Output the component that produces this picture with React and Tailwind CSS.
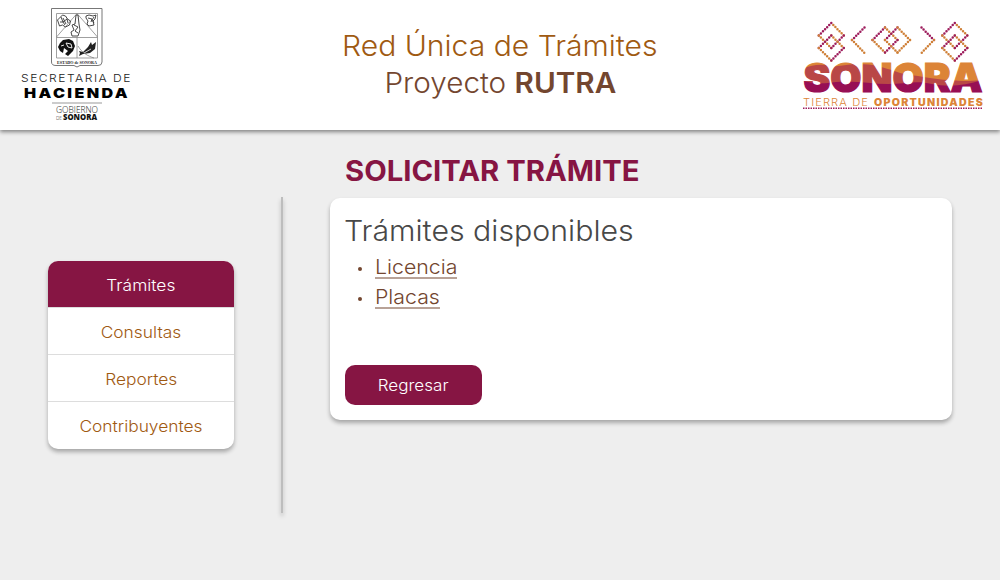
const M = "#9d1c5c";
const O = "#cf8038";

const dots = (pts) => pts.map(([x1, y1, x2, y2, c], i) => (
  <path key={i} d={`M${x1} ${y1}L${x2} ${y2}`} stroke={c} strokeWidth="2.5" strokeLinecap="round" strokeDasharray="0 2.94" />
));

function Diamonds({ x }) {
  return (
    <g>
      {dots([
        [x + 2, 25, x + 12.5, 35.5, O], [x, 23, x - 12.5, 35.5, M],
        [x - 12.5, 35.5, x, 48, O], [x + 12.5, 35.5, x, 48, M],
        [x, 35.5, x + 12.5, 48, O], [x, 35.5, x - 12.5, 48, M],
        [x - 12.5, 48, x, 60.5, O], [x + 12.5, 48, x, 60.5, M],
      ])}
    </g>
  );
}

function SonoraLogo() {
  return (
    <svg className="h-[130px] w-[200px]" viewBox="800 0 200 130" fill="none">
      <defs>
        <pattern id="dunes" patternUnits="userSpaceOnUse" x="800" y="56" width="200" height="40">
          <rect width="200" height="40" fill="#b94746" />
          <path d="M0 14C12 8 22 8 32 10C40 11 48 8 58 8C74 8 80 11 92 14C98 17 108 19 118 20C138 24 150 24 164 25C176 25 184 24 200 22V0H0Z" fill="#dc8437" />
          <path d="M0 24C14 28 22 28 36 26C54 24 72 28 88 28C104 28 116 24 132 28C148 31 164 30 182 24L200 22V40H0Z" fill="#970f54" />
        </pattern>
      </defs>
      <Diamonds x={831.3} />
      <Diamonds x={954.8} />
      {dots([
        [864.5, 27.5, 852, 40, M], [852, 40, 864.5, 53, O],
        [921.5, 27.5, 934, 40, M], [934, 40, 921.5, 53, O],
        [885, 27.5, 872.5, 40, M], [885, 27.5, 897.5, 40, O],
        [872.5, 40, 885, 52.5, O], [897.5, 40, 885, 52.5, M],
        [897.5, 27.5, 885, 40, M], [897.5, 27.5, 910, 40, O],
        [885, 40, 897.5, 52.5, O], [910, 40, 897.5, 52.5, O],
      ])}
      <text x="803.5" y="91.5" textLength="179" lengthAdjust="spacingAndGlyphs" fontFamily="Inter" fontWeight="900" fontSize="40" fill="url(#dunes)" stroke="url(#dunes)" strokeWidth="1.2">SONORA</text>
      <text x="803" y="105.5" textLength="66" lengthAdjust="spacingAndGlyphs" letterSpacing="1" fontFamily="Inter" fontWeight="300" fontSize="10" fill="#dc8437">TIERRA DE</text>
      <text x="874" y="105.5" textLength="110" lengthAdjust="spacingAndGlyphs" letterSpacing="1.2" fontFamily="Inter" fontWeight="900" fontSize="10" fill="#dc8437">OPORTUNIDADES</text>
      <path d="M803 108.3H983" stroke={M} strokeWidth="1.5" strokeDasharray="1.5 1" />
    </svg>
  );
}

function HaciendaLogo() {
  return (
    <svg className="h-[130px] w-[160px]" viewBox="0 0 160 130" fill="none">
      <path d="M51.5 8.5H102V62Q102 65.5 98 65.5H80L77 67L74 65.5H56Q51.5 65.5 51.5 62Z" stroke="#777" />
      <path d="M56.5 13.5H97.5V58H56.5ZM56.5 37.5H97.5M77 13.5L56.5 37M77 13.5L97.5 37M77 37V58" stroke="#888" strokeWidth=".8" />
      <g stroke="#333" strokeWidth=".9" strokeLinejoin="round">
        <path d="M57.5 20l3-3 2-2 3 1 2 3 3 2-1 4-4 2-3-2-3 1-1-3zM61 17l2 5 4-3 1 4M60 22l3 0 2 3M63 18l3 6" />
        <path d="M86 16l3-1 4 1 3-1-1 4-2 2 1 4-5 1-2-2 1-3-2-3zM88 18l4 1-1 3M94 17l-2 3 2 3" />
        <path d="M76 15h2l1 9 1 6-2 6h-6l-1-4 3-2-2-5 3-1zM74 25l4 2-3 4 3 2" />
      </g>
      <path d="M60 43l3-3 6-1 4 2 2 5-2 5-5 5-3-2 3-3-4-3-1 5-3-2-2-4z" fill="#111" />
      <path d="M66 43l5 1 1 4-4-1zM64 53l3-2M61 46l3-1" stroke="#fff" strokeWidth=".9" />
      <path d="M79 51l4 1 5-5 3-5 1 3 4-3-1 7-5 4-7 1-4 2 1-3z" fill="#222" />
      <path d="M84 53l7-4" stroke="#fff" strokeWidth=".8" />
      <path d="M78 46c4 7 10 10 16 12" stroke="#777" strokeWidth=".7" />
      <text x="57" y="64" textLength="40" lengthAdjust="spacingAndGlyphs" fontFamily="Liberation Serif" fontWeight="700" fontSize="4.6" fill="#222">ESTADO de SONORA</text>
      <text x="21" y="82" textLength="111" lengthAdjust="spacingAndGlyphs" letterSpacing="1.3" fontFamily="Inter" fontWeight="300" fontSize="10.5" fill="#222">SECRETARIA DE</text>
      <text x="24" y="98" textLength="106" lengthAdjust="spacingAndGlyphs" letterSpacing="2" fontFamily="Inter" fontWeight="900" fontSize="13.5" fill="#000">HACIENDA</text>
      <path d="M52 103H102" stroke="#999" />
      <text x="56" y="112.6" textLength="42" lengthAdjust="spacingAndGlyphs" fontFamily="Open Sans" fontSize="8.3" fill="#222">GOBIERNO</text>
      <text x="56" y="119.8" textLength="6" lengthAdjust="spacingAndGlyphs" fontFamily="Open Sans" fontSize="4.5" fill="#222">DE</text>
      <text x="63" y="119.8" textLength="34" lengthAdjust="spacingAndGlyphs" fontFamily="Open Sans" fontWeight="800" fontSize="8.5" fill="#111">SONORA</text>
    </svg>
  );
}

const items = ["Consultas", "Reportes", "Contribuyentes"];

export default function App() {
  return (
    <div className="flex h-[580px] w-[1000px] flex-col overflow-hidden bg-[#eeeeee] font-['Inter',sans-serif] font-light">
      <header className="flex h-[130px] shrink-0 justify-between bg-white shadow-[0_2px_4px_rgba(0,0,0,0.45)]">
        <div className="w-[200px]"><HaciendaLogo /></div>
        <h1 className="flex flex-col items-center whitespace-nowrap pt-[28px] text-[28px] leading-[37px]">
          <span className="scale-x-[1.075] text-[#9f5a12]">Red Única de Trámites</span>
          <span className="scale-x-[1.06] text-[#73462f]">Proyecto <b className="font-semibold">RUTRA</b></span>
        </h1>
        <SonoraLogo />
      </header>
      <div className="flex flex-1">
        <nav className="ml-12 mt-[131px] h-[188px] w-[186px] shrink-0 overflow-hidden rounded-[10px] bg-white text-center text-[15.5px] font-[350] shadow-[0_3px_4px_rgba(0,0,0,0.3)]">
          <a className="block h-[46px] bg-[#861543] leading-[50px] text-white">
            <span className="inline-block scale-x-[1.12]">Trámites</span>
          </a>
          {items.map((label) => (
            <a key={label} className="block h-[47px] border-t border-[#dddddd] leading-[50px] text-[#9f5a12]">
              <span className="inline-block scale-x-[1.12]">{label}</span>
            </a>
          ))}
        </nav>
        <div className="ml-[47px] mt-[67px] h-[316px] w-[2px] shrink-0 bg-[#bdbdbd] shadow-[0_3px_4px_rgba(0,0,0,0.25)]" />
        <main className="ml-[47px] w-[622px]">
          <h2 className="ml-[15px] mt-[22px] h-[46px] origin-left scale-x-[1.045] whitespace-nowrap text-[28px] font-bold leading-[38px] text-[#861543]">SOLICITAR TRÁMITE</h2>
          <section className="flex h-[222px] flex-col items-start rounded-[10px] bg-white px-[15px] pb-[15px] pt-[13px] shadow-[0_3px_4px_rgba(0,0,0,0.3)]">
            <h3 className="-ml-px origin-left scale-x-[1.045] text-[29px] leading-10 text-[#484848]">Trámites disponibles</h3>
            <ul className="mt-[2px] text-xl text-[#73462f]">
              {["Licencia", "Placas"].map((t) => (
                <li key={t} className="flex h-[30px] items-center">
                  <span className="ml-[13px] mr-[13px] mt-px h-1 w-1 rounded-full bg-[#73462f]" />
                  <a className="origin-left scale-x-[1.065] border-b-2 border-[#b8a297] leading-[20px]">{t}</a>
                </li>
              ))}
            </ul>
            <button className="mt-auto h-10 w-[137px] rounded-[10px] bg-[#861543] pt-0.5 text-[15.5px] font-[350] text-white">
              <span className="inline-block scale-x-[1.1]">Regresar</span>
            </button>
          </section>
        </main>
      </div>
    </div>
  );
}
